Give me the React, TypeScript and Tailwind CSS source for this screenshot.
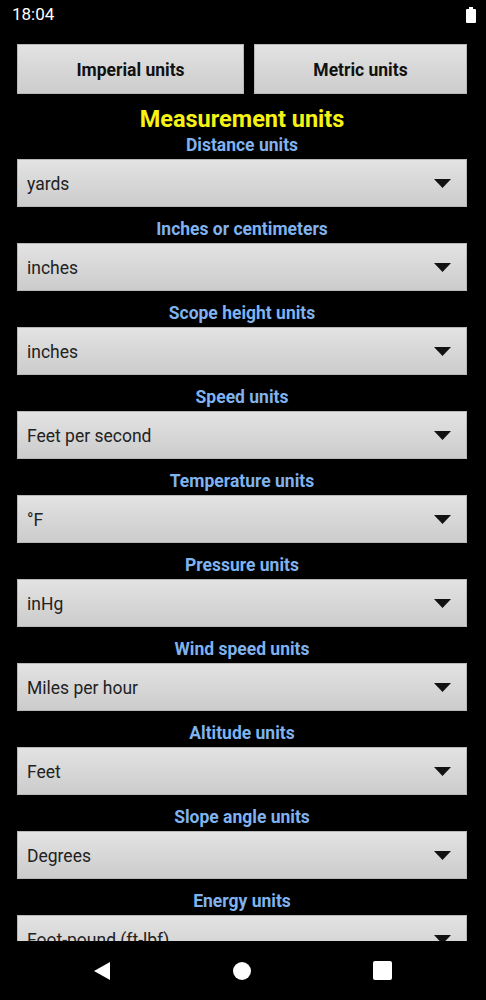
const sections = [
  { label: 'Distance units', value: 'yards' },
  { label: 'Inches or centimeters', value: 'inches' },
  { label: 'Scope height units', value: 'inches' },
  { label: 'Speed units', value: 'Feet per second' },
  { label: 'Temperature units', value: '°F' },
  { label: 'Pressure units', value: 'inHg' },
  { label: 'Wind speed units', value: 'Miles per hour' },
  { label: 'Altitude units', value: 'Feet' },
  { label: 'Slope angle units', value: 'Degrees' },
  { label: 'Energy units', value: 'Foot-pound (ft-lbf)' },
]

function Select({ value }: { value: string }) {
  return (
    <div className="h-[48px] shrink-0 flex items-center justify-between pl-[9px] pr-[15px] bg-gradient-to-b from-[#e3e3e3] to-[#cccccc] border border-[#b8b8b8]">
      <span className="text-[17.5px] text-[#222] pt-[3px]">{value}</span>
      <svg width="17" height="9" viewBox="0 0 17 9">
        <path d="M0 0 L17 0 L8.5 9 Z" fill="#111" />
      </svg>
    </div>
  )
}

export default function App() {
  return (
    <div className="w-[486px] h-[1000px] bg-black flex flex-col overflow-hidden" style={{ fontFamily: 'Roboto, "Noto Sans", sans-serif' }}>
      <div className="h-[30px] shrink-0 flex items-center justify-between pl-[12px] pr-[10px]">
        <span className="text-white text-[17px]">18:04</span>
        <div className="flex flex-col items-center">
          <div className="w-[4px] h-[2px] bg-white" />
          <div className="w-[10px] h-[14px] bg-white rounded-[1px]" />
        </div>
      </div>

      <div className="flex-1 min-h-0 overflow-hidden pl-[17px] pr-[19px] pt-[14px] flex flex-col">
        <div className="flex gap-[10px] shrink-0">
          <button className="w-[227px] h-[50px] bg-gradient-to-b from-[#e3e3e3] to-[#cccccc] border border-[#b8b8b8] text-[17.5px] font-bold text-[#111] pt-[2px]">
            Imperial units
          </button>
          <button className="flex-1 h-[50px] bg-gradient-to-b from-[#e3e3e3] to-[#cccccc] border border-[#b8b8b8] text-[17.5px] font-bold text-[#111] pt-[2px]">
            Metric units
          </button>
        </div>
        <h1 className="mt-[11px] h-[28px] leading-[28px] text-center text-[23.5px] font-bold text-[#f6f314] shrink-0">
          Measurement units
        </h1>
        {sections.map((s, i) => (
          <div key={s.label} className="flex flex-col shrink-0">
            <div className={`${i === 0 ? 'mt-[2px]' : 'mt-[12px]'} mb-[4px] h-[20px] leading-[20px] text-center text-[17.5px] font-bold text-[#7fb2ee]`}>
              {s.label}
            </div>
            <Select value={s.value} />
          </div>
        ))}
      </div>

      <div className="h-[59px] shrink-0 flex items-center pl-[93px] gap-[122px]">
        <svg width="18" height="20" viewBox="0 0 18 20">
          <path d="M17 1 L17 19 L1 10 Z" fill="#fff" />
        </svg>
        <svg width="18" height="18" viewBox="0 0 18 18">
          <circle cx="9" cy="9" r="9" fill="#fff" />
        </svg>
        <svg width="19" height="19" viewBox="0 0 19 19">
          <rect x="0" y="0" width="19" height="19" rx="2" fill="#fff" />
        </svg>
      </div>
    </div>
  )
}
